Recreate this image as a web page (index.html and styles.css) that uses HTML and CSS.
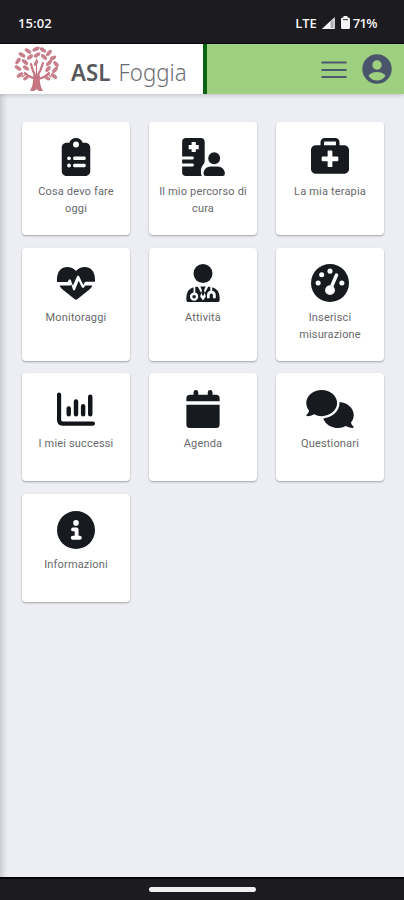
FILE: index.html
```
<!DOCTYPE html>
<html lang="it">
<head>
<meta charset="utf-8">
<title>ASL Foggia</title>
<link rel="stylesheet" href="styles.css">
</head>
<body>
<div class="status">
  <span class="time">15:02</span>
  <span class="indicators">
    <span class="lte">LTE</span>
    <svg class="signal" width="13" height="12" viewBox="0 0 13 12"><path d="M13 0V12H0Z" fill="#aaa"/><path d="M8.500 4V12H0Z" fill="#fff"/><path d="M12 1.500V11.500H1.500Z" fill="none" stroke="#eee"/></svg>
    <svg class="battery" width="9" height="13" viewBox="0 0 9 13"><path d="M2.500 0h4v1.500h1q1.500 0 1.500 1.500v8.500q0 1.500-1.500 1.500h-6Q0 13 0 11.500V3q0-1.500 1.500-1.500h1z" fill="#f4f4f4"/><path d="M2 3.600h5" stroke="#555" stroke-width="1.200"/></svg>
    <span class="percent">71%</span>
  </span>
</div>
<header class="header">
  <div class="brand">
    <svg class="tree" width="46" height="46" viewBox="0 0 46 46">
      <g fill="none" stroke="#c57480" stroke-linecap="round">
        <path d="M22 33Q15 31 11 27M23 33Q31 32 35 27M22 31Q18 24 17 18M23 31Q27 24 29 17" stroke-width="2.200"/>
        <path d="M22.500 30V13M12 28L8 31M34 28L37 31" stroke-width="1.200"/>
      </g>
      <path d="M19 29l3 2 4-2q-1 10 3 16h-4l-2.500-2-2.500 2h-4q4-7 3-16z" fill="#c57480"/>
      <g fill="#c8808b">
        <ellipse cx="22" cy="3" rx="4" ry="1.900" transform="rotate(-25 22 3)"/>
        <ellipse cx="29" cy="4" rx="3.500" ry="1.900" transform="rotate(35 29 4)"/>
        <ellipse cx="14" cy="5" rx="3.800" ry="1.900" transform="rotate(35 14 5)"/>
        <ellipse cx="35" cy="7" rx="3.800" ry="1.900" transform="rotate(-50 35 7)"/>
        <ellipse cx="8" cy="9" rx="3.800" ry="1.900" transform="rotate(30 8 9)"/>
        <ellipse cx="16" cy="11" rx="3.500" ry="1.900" transform="rotate(-40 16 11)"/>
        <ellipse cx="23" cy="9" rx="3.700" ry="1.900" transform="rotate(-35 23 9)"/>
        <ellipse cx="30" cy="11" rx="3.700" ry="1.900" transform="rotate(40 30 11)"/>
        <ellipse cx="39" cy="12" rx="3.500" ry="1.900" transform="rotate(-30 39 12)"/>
        <ellipse cx="4" cy="15" rx="3.800" ry="1.900" transform="rotate(-55 4 15)"/>
        <ellipse cx="11" cy="16" rx="3.800" ry="1.900" transform="rotate(40 11 16)"/>
        <ellipse cx="35" cy="17" rx="3.800" ry="1.900" transform="rotate(-45 35 17)"/>
        <ellipse cx="42" cy="18" rx="3.500" ry="1.900" transform="rotate(50 42 18)"/>
        <ellipse cx="4" cy="22" rx="3.800" ry="1.900" transform="rotate(35 4 22)"/>
        <ellipse cx="12" cy="22" rx="3.500" ry="1.900" transform="rotate(35 12 22)"/>
        <ellipse cx="34" cy="23" rx="3.500" ry="1.900" transform="rotate(-50 34 23)"/>
        <ellipse cx="41" cy="24" rx="3.800" ry="1.900" transform="rotate(-50 41 24)"/>
        <ellipse cx="6" cy="29" rx="3.800" ry="1.900" transform="rotate(-35 6 29)"/>
        <ellipse cx="12" cy="32" rx="3.300" ry="1.700" transform="rotate(-40 12 32)"/>
        <ellipse cx="33" cy="32" rx="3.500" ry="1.700" transform="rotate(30 33 32)"/>
        <ellipse cx="40" cy="30" rx="3.800" ry="1.900" transform="rotate(40 40 30)"/>
        <ellipse cx="22" cy="17" rx="3.200" ry="1.700" transform="rotate(-60 22 17)"/>
      </g>
    </svg>
    <span class="name"><b>ASL</b><span class="city">Foggia</span></span>
  </div>
  <svg class="menu" width="26" height="18" viewBox="0 0 26 18"><path d="M1.300 1.500H24.700M1.300 9H24.700M1.300 16H24.700" stroke="#4c5870" stroke-width="2.200" stroke-linecap="round"/></svg>
  <svg class="user" width="30" height="30" viewBox="0 0 30 30"><circle cx="15" cy="15" r="14.700" fill="#4a556c"/><circle cx="15" cy="11" r="4.700" fill="#9fd080"/><path d="M6.500 22Q9 18 15 18T23.500 22Q20 26.500 15 26.500T6.500 22Z" fill="#9fd080"/></svg>
</header>
<main class="content">
  <div class="grid">
    <a class="card"><svg class="icon" viewBox="0 0 512 512"><path fill-rule="evenodd" d="M256 0c-42 0-77 27-90 64h-38c-35 0-64 29-64 64v320c0 35 29 64 64 64h256c35 0 64-29 64-64V128c0-35-29-64-64-64h-38C333 27 298 0 256 0zm0 48a40 40 0 1 1 0 80 40 40 0 1 1 0-80zM162 248a26 26 0 1 1 0 52 26 26 0 1 1 0-52zm0 96a26 26 0 1 1 0 52 26 26 0 1 1 0-52zM232 250h140q16 0 16 24t-16 24H232q-16 0-16-24t16-24zm0 96h140q16 0 16 24t-16 24H232q-16 0-16-24t16-24z"/></svg><span>Cosa devo fare oggi</span></a>
    <a class="card"><svg class="icon wide" viewBox="0 0 576 512"><path fill-rule="evenodd" d="M48 0h208c27 0 48 21 48 48v256q0 25-9 40c-20 29-42 55-42 95v25q0 25 12 48H48c-27 0-48-21-48-48v-80h142q16 0 16-20t-16-20H0v-54h142q16 0 16-20t-16-20H0V48C0 21 21 0 48 0zm80 54v40H88v56h40v40h56v-40h40V94h-40V54z"/><circle cx="432" cy="272" r="80"/><path d="M384 384h96c53 0 96 43 96 96q0 32-32 32H320q-32 0-32-32c0-53 43-96 96-96z"/></svg><span>Il mio percorso di cura</span></a>
    <a class="card"><svg class="icon" viewBox="0 0 512 512"><path fill-rule="evenodd" d="M184 0h144c31 0 56 25 56 56v40h64c35 0 64 29 64 64v256c0 35-29 64-64 64H64c-35 0-64-29-64-64V160c0-35 29-64 64-64h64V56c0-31 25-56 56-56zm0 48q-8 0-8 8v40h160V56q0-8-8-8zm40 132v68h-68q-12 0-12 12v40q0 12 12 12h68v68q0 12 12 12h40q12 0 12-12v-68h68q12 0 12-12v-40q0-12-12-12h-68v-68q0-12-12-12h-40q-12 0-12 12z"/></svg><span>La mia terapia</span></a>
    <a class="card"><svg class="icon" viewBox="0 0 512 512"><path d="M0 240C-8 120 42 40 142 40q65 0 114 55Q305 40 370 40c100 0 150 80 142 200H390q-12 0-18 10l-18 32-56-116q-14-22-28 0l-56 126-28-76q-14-20-28 0l-16 28H0zM35 288h140q12 0 18-12l22 68q14 24 30 0l46-118 44 88q16 20 30 0l18-26h94q-12 28-36 52L277 471q-21 18-42 0L71 340q-24-24-36-52z"/></svg><span>Monitoraggi</span></a>
    <a class="card"><svg class="icon" viewBox="0 0 448 512"><circle cx="224" cy="128" r="128"/><path fill-rule="evenodd" d="M96 312v72q-48 10-48 56a56 56 0 0 0 112 0q0-46-40-56v-76h34l70 128 70-128h28v54q-44 10-44 60v38h36v-38q0-26 22-26t22 26v38h38v-38q0-50-48-60v-50q100 26 100 144v36q0 20-20 20H20q-20 0-20-20v-36Q0 338 96 312zM80 440a24 24 0 1 1 48 0 24 24 0 1 1-48 0zM188 304h72l-22 50 24 84-38 54-38-54 24-84z"/></svg><span>Attività</span></a>
    <a class="card"><svg class="icon" viewBox="0 0 512 512"><circle cx="256" cy="256" r="256"/><g fill="#fff"><circle cx="96" cy="256" r="34"/><circle cx="144" cy="144" r="34"/><circle cx="256" cy="96" r="34"/><circle cx="416" cy="256" r="34"/><circle cx="256" cy="352" r="66"/></g><path d="M260 344L344 148" stroke="#fff" stroke-width="46" stroke-linecap="round"/></svg><span>Inserisci misurazione</span></a>
    <a class="card"><svg class="icon" viewBox="0 0 512 512"><path d="M28 60V404Q28 452 76 452H484" fill="none" stroke="#111519" stroke-width="56" stroke-linecap="round"/><path d="M158 250v78M256 154v174M352 218v110M448 92v236" stroke="#111519" stroke-width="60" stroke-linecap="round"/></svg><span>I miei successi</span></a>
    <a class="card"><svg class="icon" viewBox="0 0 448 512"><path d="M96 32q0-32 32-32t32 32v32h128V32q0-32 32-32t32 32v32h48q48 0 48 48v40H0v-40q0-48 48-48h48zM0 200h448v264q0 48-48 48H48q-48 0-48-48z"/></svg><span>Agenda</span></a>
    <a class="card"><svg class="icon chat" viewBox="0 0 640 512"><path d="M208 352c115 0 208-79 208-176S323 0 208 0 0 79 0 176c0 38 14 74 39 103q-7 26-34 54c-10 11-2 19 11 19q44 0 92-26c29 16 64 26 100 26zM448 176c0 112-99 196-218 207 25 76 107 129 202 129 37 0 71-9 101-26q46 26 91 26c13 0 20-12 11-20q-25-22-34-53c25-30 39-65 39-103 0-92-84-168-193-175q1 7 1 15z"/></svg><span>Questionari</span></a>
    <a class="card"><svg class="icon" viewBox="0 0 512 512"><circle cx="256" cy="256" r="256"/><circle cx="256" cy="160" r="38" fill="#fff"/><path d="M216 248H264V360M212 360H308" fill="none" stroke="#fff" stroke-width="52" stroke-linecap="round" stroke-linejoin="round"/></svg><span>Informazioni</span></a>
  </div>
</main>
<footer class="navbar"><div class="handle"></div></footer>
</body>
</html>
```
FILE: styles.css
```
* { box-sizing: border-box; }
body {
  margin: 0;
  width: 404px;
  height: 900px;
  overflow: hidden;
  display: flex;
  flex-direction: column;
  background: #edeef4;
  font-family: Roboto, sans-serif;
}
.status {
  height: 44px;
  flex: none;
  display: flex;
  align-items: center;
  justify-content: space-between;
  padding: 2px 27px 0 18px;
  background: #1c1b20;
  border-bottom: 1px solid #08080a;
  color: #f5f5f5;
  font: 600 13px/16px "Open Sans", sans-serif;
}
.time { letter-spacing: .1px; }
.indicators { display: flex; align-items: center; }
.lte { letter-spacing: -.1px; }
.signal { margin-left: 5px; }
.battery { margin: 0 3px 0 6px; }
.percent { letter-spacing: -.6px; }
.header {
  height: 50px;
  flex: none;
  display: flex;
  align-items: center;
  background: #9fd080;
  box-shadow: 0 1px 5px #0003;
  z-index: 1;
}
.brand {
  width: 207px;
  height: 50px;
  display: flex;
  align-items: center;
  padding-left: 14px;
  background: #fff;
  border-right: 4px solid #086413;
}
.name {
  display: flex;
  gap: 9px;
  margin-left: 11px;
  padding-top: 6px;
  color: #58585c;
  font: 24px/30px "Noto Sans", sans-serif;
  white-space: nowrap;
  transform: scaleX(.925);
  transform-origin: left;
}
.name b { font-weight: 600; }
.city { color: #6c6c70; font-weight: 300; }
.menu { margin-left: 114px; margin-top: 2px; }
.user { margin-left: 15px; }
.content {
  flex: 1;
  padding: 28px 20px 0 22px;
  box-shadow: inset 7px 0 6px -5px #0003;
}
.grid {
  display: grid;
  grid-template-columns: repeat(3, 108px);
  grid-template-rows: 113px 113px 108px 108px;
  gap: 12.700px 19px;
}
.card {
  display: flex;
  flex-direction: column;
  align-items: center;
  padding: 16px 8px 0;
  border-radius: 4px;
  background: #fff;
  box-shadow: 0 1px 2px #00000052;
  color: #68696c;
  font-size: 11px;
  line-height: 17px;
  letter-spacing: .17px;
  text-align: center;
}
.card:nth-child(n+7) { padding-top: 16.500px; }
.icon {
  height: 38px;
  width: 38px;
  margin-bottom: 7px;
  overflow: visible;
  fill: #171b20;
}
.wide { width: 43px; }
.chat { width: 48px; }
.navbar {
  height: 23px;
  flex: none;
  display: flex;
  justify-content: center;
  align-items: center;
  background: #1c1b20;
  border-top: 2px solid #050507;
}
.handle {
  width: 107px;
  height: 5px;
  border-radius: 3px;
  background: #f0f0f0;
}
```
